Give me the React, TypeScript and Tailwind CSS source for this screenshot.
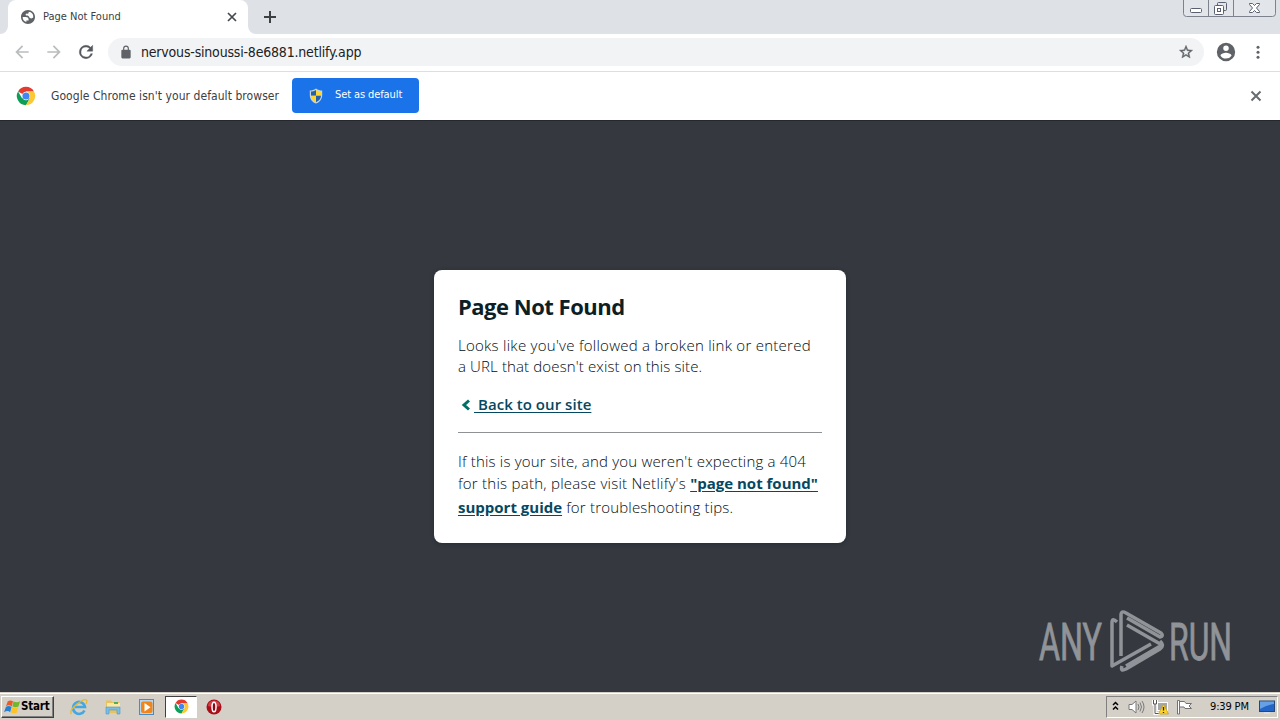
import React from 'react';

type IconProps = { className?: string };

function ChromeLogo({ className }: IconProps) {
  return (
    <svg viewBox="0 0 48 48" className={className}>
      <path d="M24 24 L4.9 13 A22 22 0 0 1 43.1 13 L24 13Z" fill="#e33b2e" />
      <path d="M24 24 L14.5 29.5 L4.9 13 A22 22 0 0 0 24 46 L33.5 29.5Z" fill="#109d58" />
      <path d="M24 13 H43.1 A22 22 0 0 1 24 46 L33.5 29.5Z" fill="#fcc934" />
      <circle cx="24" cy="24" r="10" fill="#fff" />
      <circle cx="24" cy="24" r="8.6" fill="#4285f4" />
    </svg>
  );
}

function Globe() {
  return (
    <svg viewBox="0 0 24 24" className="size-4 shrink-0" fill="#5f6368">
      <path d="M12 1.500C6.200 1.500 1.500 6.200 1.500 12S6.200 22.500 12 22.500 22.500 17.800 22.500 12 17.800 1.500 12 1.500zM4 12h4.400c3.400.02 4.900 1.730 4.500 5.150H9.500v2.470A8 8 0 0 1 4 12zm15.900.500c-.900 1.400-3.200 2.200-4.900 1.100-1.500-1-1.200-3.100-3-3.600-1.300-.300-2.500.300-3.300-.700-.800-1.300.8-2.800 2.300-2.300 1.400.500 2.200-.500 2-2.700a8 8 0 0 1 6.900 8.200z" />
    </svg>
  );
}

function Shield() {
  return (
    <svg viewBox="0 0 16 16" className="size-4 shrink-0">
      <path d="M8 .5 C6 2 4 2.500 1.800 2.500 V7 C1.800 11 4 14 8 15.600 C12 14 14.200 11 14.200 7 V2.500 C12 2.500 10 2 8 .5Z" fill="#c9d3dc" />
      <path d="M8 2 C6 3.200 4.600 3.500 3 3.600 V7.800 H8Z" fill="#2560a8" />
      <path d="M8 2 C10 3.200 11.400 3.500 13 3.600 V7.800 H8Z" fill="#fbd634" />
      <path d="M3 7.800 H8 V14.200 C5 13 3.300 11 3 7.800Z" fill="#fbd634" />
      <path d="M13 7.800 H8 V14.200 C11 13 12.700 11 13 7.800Z" fill="#2560a8" />
    </svg>
  );
}

function WindowButtons() {
  return (
    <svg viewBox="0 0 94 18" className="h-[18px] w-[94px]" fill="none" stroke="#7d838d">
      <path d="M.5 0V13.500Q.5 16.500 3.500 16.500H89.500Q92.500 16.500 92.500 13.500V0M25.500 0V16M50.500 0V16" fill="#e2e5e9" />
      <g stroke="#596070">
        <rect x="7.500" y="8.500" width="11" height="4" rx="1" fill="#fff" />
        <path d="M34.500 5V3.500Q34.500 2.500 35.500 2.500H42.500Q43.500 2.500 43.500 3.500V9.500Q43.500 10.500 42.500 10.500H41" />
        <rect x="31.500" y="5.500" width="9" height="9" rx="1" fill="#fff" />
        <rect x="34.500" y="8.500" width="3" height="3" />
        <path d="M66.500 3.500H69.500L71.500 5.500L73.500 3.500H76.500V4.500L73.500 8L76.500 11.500V12.500H73.500L71.500 10.500L69.500 12.500H66.500V11.500L69.500 8L66.500 4.500Z" fill="#fff" />
      </g>
    </svg>
  );
}

function TabStrip() {
  return (
    <div className="flex h-[34px] bg-[#dee1e6]">
      <div className="w-2 bg-white">
        <div className="h-full rounded-br-lg bg-[#dee1e6]" />
      </div>
      <div className="flex w-60 items-center rounded-t-lg bg-white pr-[10px] pl-3">
        <Globe />
        <span className="ml-[7px] flex-1 whitespace-nowrap font-['DejaVu_Sans_Condensed','DejaVu_Sans',sans-serif] text-[11px] leading-4 tracking-[0px] text-[#3c4043]">Page Not Found</span>
        <svg viewBox="0 0 12 12" className="size-3" stroke="#45494d" strokeWidth="1.700"><path d="M2 2L10 10M10 2L2 10" /></svg>
      </div>
      <div className="w-2 bg-white">
        <div className="h-full rounded-bl-lg bg-[#dee1e6]" />
      </div>
      <svg viewBox="0 0 14 14" className="mt-[10px] ml-[7px] size-[14px]" stroke="#3c4043" strokeWidth="2"><path d="M7 1V13M1 7H13" /></svg>
      <div className="ml-auto pr-[3px]"><WindowButtons /></div>
    </div>
  );
}

function Toolbar() {
  return (
    <div className="flex h-[38px] items-center border-b border-[#dcdee1] bg-white pb-px pl-3">
      <svg viewBox="0 0 24 24" className="size-5" fill="#babcbe"><path d="M20 11H7.830l5.590-5.590L12 4l-8 8 8 8 1.410-1.410L7.830 13H20v-2z" /></svg>
      <svg viewBox="0 0 24 24" className="ml-3 size-5" fill="#babcbe"><path d="M12 4l-1.410 1.410L16.170 11H4v2h12.170l-5.580 5.590L12 20l8-8z" /></svg>
      <svg viewBox="0 0 24 24" className="ml-3 size-5" fill="#54585c"><path d="M17.650 6.350A7.960 7.960 0 0 0 12 4a8 8 0 1 0 7.730 10h-2.080A6 6 0 1 1 12 6c1.660 0 3.140.69 4.220 1.780L13 11h7V4l-2.350 2.350z" stroke="#54585c" strokeWidth=".5" /></svg>
      <div className="ml-3 flex h-7 w-[1096px] items-center rounded-full bg-[#f1f3f4] pr-[10px] pl-[11px]">
        <svg viewBox="0 0 24 24" className="size-[14px]" fill="#5f6368"><path d="M18 8h-1V6A5 5 0 0 0 7 6v2H6a2 2 0 0 0-2 2v11a2 2 0 0 0 2 2h12a2 2 0 0 0 2-2V10a2 2 0 0 0-2-2zM9 8V6a3 3 0 0 1 6 0v2z" /></svg>
        <span className="ml-2 flex-1 whitespace-nowrap font-['DejaVu_Sans_Condensed','DejaVu_Sans',sans-serif] text-sm tracking-[-0.19px] text-[#202124]">nervous-sinoussi-8e6881.netlify.app</span>
        <svg viewBox="0 0 24 24" className="size-4" fill="#5f6368" stroke="#5f6368" strokeWidth=".6"><path d="M22 9.240l-7.190-.62L12 2 9.190 8.630 2 9.240l5.460 4.730L5.820 21 12 17.270 18.180 21l-1.630-7.030L22 9.240zM12 15.400l-3.760 2.270 1-4.280-3.320-2.880 4.380-.38L12 6.100l1.710 4.040 4.380.38-3.320 2.880 1 4.280L12 15.400z" /></svg>
      </div>
      <svg viewBox="0 0 24 24" className="ml-[11px] size-[22px]" fill="#5f6368"><path d="M12 2a10 10 0 1 0 0 20 10 10 0 0 0 0-20zm0 3a3 3 0 1 1 0 6 3 3 0 0 1 0-6zm0 14.200a7.200 7.200 0 0 1-6-3.220c.03-1.990 4-3.080 6-3.080s5.970 1.090 6 3.080a7.200 7.200 0 0 1-6 3.220z" /></svg>
      <svg viewBox="0 0 4 14" className="ml-[19px] h-[14px] w-1" fill="#5f6368"><circle cx="2" cy="2.200" r="1.500" /><circle cx="2" cy="7.200" r="1.500" /><circle cx="2" cy="12.200" r="1.500" /></svg>
    </div>
  );
}

function InfoBar() {
  return (
    <div className="flex h-12 items-center bg-white pr-[18px] pb-px pl-4">
      <ChromeLogo className="size-5" />
      <span className="ml-[15px] w-[241px] whitespace-nowrap font-['DejaVu_Sans_Condensed','DejaVu_Sans',sans-serif] text-[12px] tracking-[0.06px] text-[#3c4043]">Google Chrome isn't your default browser</span>
      <div className="flex h-[35px] w-[127px] items-center rounded bg-[#1a73e8] pl-4">
        <Shield />
        <span className="ml-[11px] whitespace-nowrap font-['DejaVu_Sans_Condensed','DejaVu_Sans',sans-serif] text-[11px] tracking-[-0.1px] text-white">Set as default</span>
      </div>
      <svg viewBox="0 0 12 12" className="mt-px ml-auto size-3" stroke="#686c70" strokeWidth="2"><path d="M1.500 1.500L10.500 10.500M10.500 1.500L1.500 10.500" /></svg>
    </div>
  );
}

function Card() {
  return (
    <div className="mt-[149px] h-[273px] w-[412px] rounded-lg bg-white px-6 pt-[20px] font-['Open_Sans','Noto_Sans',sans-serif] text-[15px] text-[#0e1e25] shadow-[0_1px_4px_rgba(14,30,37,0.4)]">
      <h1 className="h-[33px] text-[22px] leading-[33px] font-bold whitespace-nowrap tracking-[-0.49px]">Page Not Found</h1>
      <p className="mt-[12px] font-light whitespace-nowrap text-[#000c12]">
        <span className="block h-[21px] leading-[21px] tracking-[0.27px]">Looks like you've followed a broken link or entered</span>
        <span className="block h-[21px] leading-[21px] tracking-[0.13px]">a URL that doesn't exist on this site.</span>
      </p>
      <p className="mt-[16px] flex h-[23px] items-center font-semibold whitespace-nowrap text-[#054861]">
        <svg viewBox="0 0 10 14" className="mr-[3px] ml-[3px] h-[14px] w-[10px]" fill="none" stroke="#007067" strokeWidth="3"><path d="M8 2.500L3 7L8 11.500" /></svg>
        <a className="whitespace-pre tracking-[0.05px] underline underline-offset-2"> Back to our site</a>
      </p>
      <hr className="mt-[16px] border-[#8f9295]" />
      <p className="mt-[17px] font-light whitespace-nowrap text-[#000c12]">
        <span className="block h-[22px] leading-[22px] tracking-[0.19px]">If this is your site, and you weren't expecting a 404</span>
        <span className="block h-[23px] leading-[22px] tracking-[0.26px]">for this path, please visit Netlify's <a className="font-bold tracking-normal text-[#054861] underline underline-offset-2">"page not found"</a></span>
        <span className="block h-[23px] leading-[24px] tracking-[0.19px]"><a className="font-bold tracking-normal text-[#054861] underline underline-offset-2">support guide</a> for troubleshooting tips.</span>
      </p>
    </div>
  );
}

function Watermark() {
  return (
    <svg viewBox="0 0 210 70" className="absolute right-[34px] bottom-[16px] h-[70px] w-[210px]" fill="#909397">
      <g fontFamily="Roboto, 'Liberation Sans', sans-serif" fontSize="52" stroke="#909397" strokeWidth=".9">
        <text x="3" y="54" textLength="63" lengthAdjust="spacingAndGlyphs">ANY</text>
        <text x="133" y="54" textLength="63" lengthAdjust="spacingAndGlyphs">RUN</text>
      </g>
      <g fill="none" stroke="#909397" strokeWidth="3.500" strokeLinejoin="round">
        <path d="M81 16Q76 11 76 17V60L115 38" />
        <path d="M85 50V9Q85 4 90 7L125 27Q128 30 124 31L91 12" />
        <path d="M91 19L126 39L90 60M86 60Q84 66 90 63L124 43Q129 39 124 35" />
      </g>
    </svg>
  );
}

function StartFlag() {
  return (
    <svg viewBox="0 0 18 16" className="h-4 w-[17px]">
      <path d="M4 2Q7 0 9.500 2L8.300 7.500Q5 5 2 7.500Z" fill="#ed5a24" />
      <path d="M10 2Q13 4 17 2L15.300 7.500Q12 9 9 7.500Z" fill="#72b62b" />
      <path d="M2 8Q5 6 8 8L6.500 13.500Q4 11 0 13.500Z" fill="#2381d4" />
      <path d="M8.700 8Q12 10 15 8L13.500 14Q10 15.500 7 13.500Z" fill="#fbc327" />
    </svg>
  );
}

function Taskbar() {
  return (
    <div className="flex h-7 items-center border-t border-[#d4d0c8] bg-[#d4d0c8] shadow-[inset_0_1px_0_#fff]">
      <div className="ml-px flex h-[22px] w-[53px] items-center border border-t-white border-r-[#404040] border-b-[#404040] border-l-white pl-[2px] shadow-[inset_-1px_-1px_0_#808080]">
        <StartFlag />
        <span className="pt-px font-['DejaVu_Sans_Condensed','DejaVu_Sans',sans-serif] text-[11.5px] font-bold tracking-[-0.2px] text-black">Start</span>
      </div>
      <svg viewBox="0 0 18 18" className="ml-[16px] size-[18px]" fill="none">
        <path d="M14.500 12.500A6 6 0 1 1 15 9H5" stroke="#45a7e2" strokeWidth="2.600" />
        <path d="M1.500 16Q-1 13 6 7Q14 0 16.500 2Q17.500 3 16 6" stroke="#e9b92f" strokeWidth="1.400" />
      </svg>
      <svg viewBox="0 0 18 18" className="ml-4 size-[18px]">
        <path d="M2 2.500H7L8 4H15V15H2Z" fill="#e9c25b" /><path d="M3 5H16V10H3Z" fill="#fbe9a3" /><path d="M10 4H14V6H10Z" fill="#4fae58" />
        <path d="M2 9H16V16H13V12H5V16H2Z" fill="#79bde6" stroke="#4a99c9" strokeWidth=".6" />
      </svg>
      <svg viewBox="0 0 18 18" className="ml-4 size-[18px]">
        <rect x="1.500" y="1.500" width="14" height="15" fill="#b7d6ef" stroke="#4b8ac2" /><rect x="3" y="3.500" width="11.500" height="11.500" rx="2" fill="#f08519" /><path d="M6.500 5L12.500 9.200L6.500 13.500Z" fill="#fff" />
      </svg>
      <div className="ml-[9px] flex h-[22px] w-8 items-center justify-center border border-t-[#404040] border-r-white border-b-white border-l-[#404040] bg-white"><ChromeLogo className="size-[15px]" /></div>
      <svg viewBox="0 0 16 16" className="ml-[9px] size-4">
        <circle cx="8" cy="8" r="7.500" fill="#a90f18" /><path d="M2 7A6 5.500 0 0 1 14 7Q8 9 2 7Z" fill="#cf4148" /><ellipse cx="8" cy="8" rx="2" ry="4.800" fill="#8d0a12" stroke="#fff" strokeWidth="1.500" />
      </svg>
      <div className="mr-[2px] ml-auto flex h-[22px] w-[172px] items-center border border-t-[#808080] border-r-white border-b-white border-l-[#808080] pl-[5px]">
        <svg viewBox="0 0 7 10" className="mb-[2px] h-[10px] w-[7px]" fill="none" stroke="#000" strokeWidth="1.500"><path d="M1 4L3.500 1.500L6 4M1 8.500L3.500 6L6 8.500" /></svg>
        <svg viewBox="0 0 17 16" className="ml-[9px] h-4 w-[17px]" fill="none" stroke="#77797b"><path d="M1 5.500H4L8 2V14L4 10.500H1Z" fill="#fff" /><path d="M10 5Q12 8 10 11M12 3.500Q15 8 12 12.500M14 2Q18 8 14 14" /></svg>
        <svg viewBox="0 0 17 16" className="ml-[7px] h-4 w-[17px]" fill="none">
          <rect x="5.500" y="3.500" width="10" height="8" fill="#a4a7a9" stroke="#fff" /><path d="M1.500 1V5H4.500V1M3 5V14.500H8" stroke="#fff" strokeWidth="3" /><path d="M1.500 1V5H4.500V1M3 5V14.500H8" stroke="#555" />
          <path d="M11.500 5L16.500 15H6.500Z" fill="#ffd42a" stroke="#c59c00" strokeWidth=".7" /><path d="M11.500 8V11.500M11.500 13V14" stroke="#222" strokeWidth="1.300" />
        </svg>
        <svg viewBox="0 0 17 16" className="ml-[7px] h-4 w-[17px]" fill="#fff" stroke="#707274"><path d="M1.500 1.500H3.500V15H1.500ZM3.500 2.500H8.500L10 4.500H15.500L13 7L15.500 9.500H9L8 8H3.500Z" /></svg>
        <span className="ml-[17px] pt-[2px] whitespace-nowrap font-['DejaVu_Sans_Condensed','DejaVu_Sans',sans-serif] text-[11px] tracking-[-0.15px] text-black">9:39 PM</span>
        <svg viewBox="0 0 16 14" className="mr-[2px] ml-auto h-[14px] w-4"><rect x=".5" y="1" width="15" height="10.500" fill="#2366c8" stroke="#254878" /><path d="M1 1.500H15V4Q8 5 1 9Z" fill="#67a1e5" /><path d="M5 13H11" stroke="#dceafa" /></svg>
      </div>
    </div>
  );
}

export default function App() {
  return (
    <div className="flex h-[720px] w-[1280px] flex-col overflow-hidden">
      <TabStrip />
      <Toolbar />
      <InfoBar />
      <main className="relative flex flex-1 items-start justify-center border-t border-[#24282d] bg-[#35383f]">
        <Card />
        <Watermark />
      </main>
      <Taskbar />
    </div>
  );
}
